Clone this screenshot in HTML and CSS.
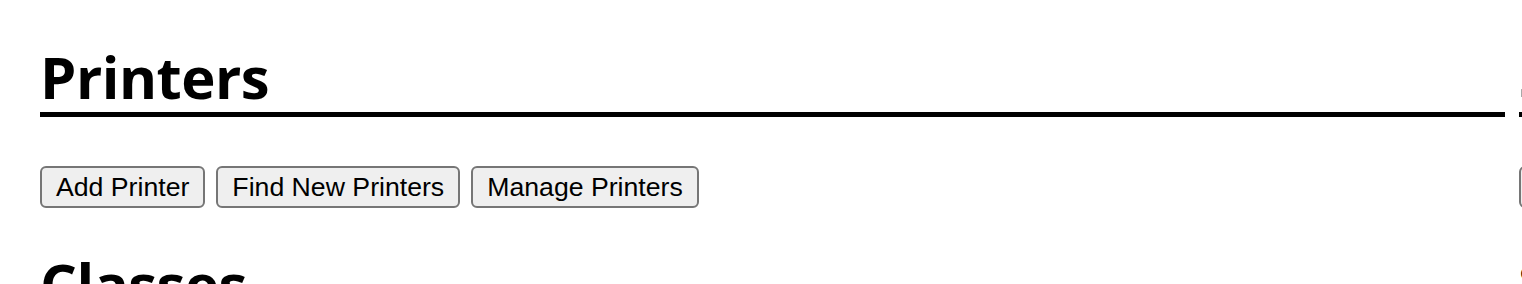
FILE: index.html
```html
<!DOCTYPE html>
<html>
<head>
<meta charset="utf-8">
<title>Administration - CUPS</title>
<link rel="stylesheet" href="styles.css">
</head>
<body>
<div class="page">
  <div class="columns">
    <div class="column">
      <h2 class="section-title">Printers</h2>
      <div class="actions">
        <button class="btn">Add Printer</button>
        <button class="btn">Find New Printers</button>
        <button class="btn">Manage Printers</button>
      </div>
      <h2 class="section-title">Classes</h2>
      <div class="actions">
        <button class="btn">Add Class</button>
        <button class="btn">Manage Classes</button>
      </div>
    </div>
    <div class="column">
      <h2 class="section-title">Server</h2>
      <div class="actions">
        <button class="btn">Edit Configuration File</button>
        <button class="btn">View Access Log</button>
        <button class="btn">View Error Log</button>
      </div>
      <h3 class="sub-title">Server Settings:</h3>
    </div>
  </div>
</div>
</body>
</html>
```

FILE: styles.css
```css
html, body {
  margin: 0;
  padding: 0;
  background: #ffffff;
  overflow: hidden;
}

.page {
  padding: 48px 0 0 40px;
}

.columns {
  display: flex;
  gap: 14px;
  width: 2944px;
}

.column {
  width: 1465px;
  flex: 0 0 1465px;
}

.section-title {
  margin: 0;
  font-family: "Open Sans", "DejaVu Sans", sans-serif;
  font-weight: 700;
  font-size: 58px;
  line-height: 58px;
  letter-spacing: -0.5px;
  color: #000;
  padding-bottom: 6px;
  border-bottom: 5px solid #000;
}

.actions {
  display: flex;
  gap: 11px;
  margin: 49px 0 47px 0;
}

.btn {
  font-family: "Liberation Sans", Arial, sans-serif;
  font-size: 26.67px;
  line-height: 30px;
  padding: 4px 14px;
  border: 2px solid #767676;
  border-radius: 6px;
  background: #efefef;
  color: #000;
  margin: 0;
}

.sub-title {
  margin: 0;
  font-family: "Open Sans", "DejaVu Sans", sans-serif;
  font-weight: 700;
  font-size: 40px;
  line-height: 48px;
}
```
